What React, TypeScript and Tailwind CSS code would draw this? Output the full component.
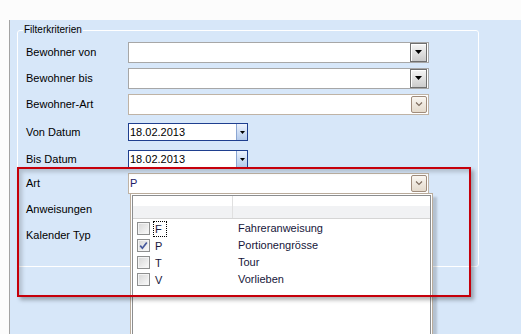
function GrayCombo() {
  return (
    <div className="flex h-[21px] w-[301px] border border-[#a7a7a7] bg-white">
      <div className="flex-1" />
      <div className="mr-[1px] flex w-[17px] items-center justify-center border border-[#6f6f6f] bg-gradient-to-b from-[#f6f6f6] to-[#cbcbcb] shadow-[inset_1px_1px_0_#ffffff]">
        <svg width="7" height="4" viewBox="0 0 7 4">
          <path d="M0 0H7L3.5 4Z" fill="#000" />
        </svg>
      </div>
    </div>
  );
}

function TanCombo({ value }: { value?: string }) {
  return (
    <div className="flex h-[21px] w-[301px] items-center border border-[#bfb3a5] bg-white">
      <span className="flex-1 pl-[1px] text-[#1c1c66]">{value}</span>
      <div className="mr-[1px] flex h-[17px] w-[16px] items-center justify-center rounded-[2px] border border-[#9f8c7c] bg-gradient-to-b from-[#faf7f2] to-[#e4dacc]">
        <svg width="8" height="5" viewBox="0 0 8 5">
          <path d="M1 0.5L4 3.5L7 0.5" stroke="#7c6a5c" strokeWidth="1.1" fill="none" />
        </svg>
      </div>
    </div>
  );
}

function DateBox({ value }: { value: string }) {
  return (
    <div className="flex h-[18px] w-[120px] border border-[#1f3f8f] bg-white">
      <span className="flex-1 pl-[1px] leading-[16px] text-black">{value}</span>
      <div className="flex w-[11px] items-center justify-center border-l border-[#8ba6d3] bg-gradient-to-b from-[#edf3fd] to-[#b4cbec]">
        <svg width="5" height="3" viewBox="0 0 5 3">
          <path d="M0 0H5L2.5 3Z" fill="#000" />
        </svg>
      </div>
    </div>
  );
}

function Check({ on }: { on?: boolean }) {
  return (
    <div className="flex h-[13px] w-[13px] items-center justify-center border border-[#8e8f8f] bg-gradient-to-br from-[#d6d6d6] to-[#fbfbfb] shadow-[inset_0_0_0_1px_#f4f4f4]">
      {on && (
        <svg width="9" height="9" viewBox="0 0 9 9">
          <path d="M1.2 4.6L3.4 7.2L7.8 1.4" stroke="#46589c" strokeWidth="1.7" fill="none" />
        </svg>
      )}
    </div>
  );
}

const rows = [
  { key: "F", text: "Fahreranweisung", on: false, focus: true },
  { key: "P", text: "Portionengrösse", on: true, focus: false },
  { key: "T", text: "Tour", on: false, focus: false },
  { key: "V", text: "Vorlieben", on: false, focus: false },
];

export default function App() {
  return (
    <div className="relative h-[334px] w-[521px] overflow-hidden bg-[#fcfcfc] font-['Liberation_Sans',Arial,sans-serif] text-[11px] text-black">
      <div className="h-[20px] bg-[#fcfcfc]" />
      <div className="flex h-[314px]">
        <div className="w-[10px] border-r border-[#a3a3a3] bg-[#fcfcfc]" />
        <div className="flex-1 bg-[#d7e7f9] pl-[7px] pt-[10px]">
          <div className="relative h-[237px] w-[462px] rounded-[3px] border border-white">
            <span className="absolute -top-[7px] left-[5px] bg-[#d7e7f9] px-[1px] text-[10px] leading-[12px]">
              Filterkriterien
            </span>
            <div className="flex flex-col pl-[8px] pt-[8px]">
              <div className="flex h-[26px] items-center">
                <span className="w-[102px]">Bewohner von</span>
                <GrayCombo />
              </div>
              <div className="flex h-[26px] items-center">
                <span className="w-[102px]">Bewohner bis</span>
                <GrayCombo />
              </div>
              <div className="flex h-[26px] items-center">
                <span className="w-[102px]">Bewohner-Art</span>
                <TanCombo />
              </div>
              <div className="flex h-[30px] items-center">
                <span className="w-[102px]">Von Datum</span>
                <DateBox value="18.02.2013" />
              </div>
              <div className="flex h-[24px] items-center">
                <span className="w-[102px]">Bis Datum</span>
                <DateBox value="18.02.2013" />
              </div>
              <div className="flex h-[25px] items-center">
                <span className="w-[102px]">Art</span>
                <TanCombo value="P" />
              </div>
              <div className="flex h-[26px] items-center">
                <span className="w-[102px]">Anweisungen</span>
              </div>
              <div className="flex h-[26px] items-center">
                <span className="w-[102px]">Kalender Typ</span>
              </div>
            </div>
          </div>
        </div>
      </div>

      {/* dropped-down list of the "Art" combo */}
      <div className="absolute left-[130px] top-[193px] h-[150px] w-[303px] border border-[#b9ab9b] bg-white p-[1px] shadow-[4px_4px_2px_rgba(0,0,0,0.16)]">
        <div className="h-full border border-[#8c8e90] bg-white">
          <div className="flex h-[23px] border-b border-[#d5d5d5] bg-[linear-gradient(#ffffff_0%,#ffffff_45%,#f1f2f4_45%,#f1f2f4_100%)]">
            <div className="w-[100px] border-r border-[#e0e0e0]" />
            <div className="flex-1" />
          </div>
          <div className="mt-[1px] flex flex-col text-[#16163a]">
            {rows.map((r) => (
              <div key={r.key} className="flex h-[17px] items-center">
                <div className="flex w-[100px] items-center pl-[4px]">
                  <Check on={r.on} />
                  <span
                    className={
                      "ml-[3px] h-[16px] w-[14px] border pl-[1px] leading-[14px] " +
                      (r.focus ? "border-dotted border-black" : "border-transparent")
                    }
                  >
                    {r.key}
                  </span>
                </div>
                <span className="pl-[5px]">{r.text}</span>
              </div>
            ))}
          </div>
        </div>
      </div>

      {/* red annotation frame */}
      <div className="pointer-events-none absolute left-[17px] top-[167px] z-10 h-[130px] w-[454px] border-2 border-[#c6000b] shadow-[3px_3px_4px_rgba(0,0,0,0.3),inset_3px_3px_4px_rgba(0,0,0,0.18)]" />
    </div>
  );
}
